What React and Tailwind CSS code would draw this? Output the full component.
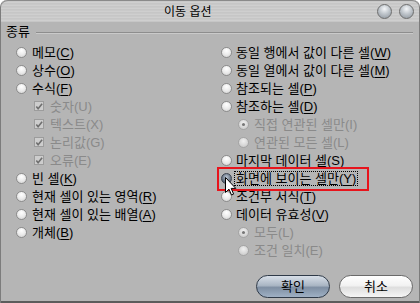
import React from 'react';

const leftItems = [
  { t: '메모', k: 'C' },
  { t: '상수', k: 'O' },
  { t: '수식', k: 'F' },
  { t: '숫자', k: 'U', sub: 'check' },
  { t: '텍스트', k: 'X', sub: 'check' },
  { t: '논리값', k: 'G', sub: 'check' },
  { t: '오류', k: 'E', sub: 'check' },
  { t: '빈 셀', k: 'K' },
  { t: '현재 셀이 있는 영역', k: 'R' },
  { t: '현재 셀이 있는 배열', k: 'A' },
  { t: '개체', k: 'B' },
];

const rightItems = [
  { t: '동일 행에서 값이 다른 셀', k: 'W' },
  { t: '동일 열에서 값이 다른 셀', k: 'M' },
  { t: '참조되는 셀', k: 'P' },
  { t: '참조하는 셀', k: 'D' },
  { t: '직접 연관된 셀만', k: 'I', sub: 'radioOn' },
  { t: '연관된 모든 셀', k: 'L', sub: 'radioOff' },
  { t: '마지막 데이터 셀', k: 'S', plain: true },
  { t: '화면에 보이는 셀만', k: 'Y', focus: true },
  { t: '조건부 서식', k: 'T' },
  { t: '데이터 유효성', k: 'V' },
  { t: '모두', k: 'L', sub: 'radioOn' },
  { t: '조건 일치', k: 'E', sub: 'radioOff' },
];

function Radio({ variant }) {
  if (variant === 'active') {
    return (
      <span className="w-[11px] h-[11px] rounded-full border border-[#3c4450] bg-[radial-gradient(circle_at_50%_35%,#b8c4d2_0%,#6c7888_55%,#3e4856_100%)] shrink-0" />
    );
  }
  if (variant === 'radioOn' || variant === 'radioOff') {
    return (
      <span className="w-[11px] h-[11px] rounded-full border border-[#a4a4a4] bg-[radial-gradient(circle_at_50%_35%,#f0f0f0_0%,#d6d6d6_60%,#c2c2c2_100%)] shrink-0 flex items-center justify-center">
        {variant === 'radioOn' && <span className="w-[3px] h-[3px] rounded-full bg-[#777]" />}
      </span>
    );
  }
  return (
    <span className="w-[11px] h-[11px] rounded-full border border-[#8c8c8c] bg-[radial-gradient(circle_at_50%_30%,#ffffff_0%,#ececec_50%,#cfcfcf_100%)] shrink-0" />
  );
}

function Check() {
  return (
    <span className="w-[10px] h-[10px] border border-[#9c9c9c] bg-[#cdcdcd] shrink-0 flex items-center justify-center">
      <svg width="9" height="9" viewBox="0 0 9 9">
        <path d="M1.5 4.5 L3.5 7 L8 1.5" stroke="#6e6e6e" strokeWidth="1.8" fill="none" />
      </svg>
    </span>
  );
}

function Row({ item, right }) {
  const disabled = !!item.sub;
  let marker;
  if (item.sub === 'check') marker = <Check />;
  else if (item.sub) marker = <Radio variant={item.sub} />;
  else marker = <Radio variant={item.focus ? 'active' : 'normal'} />;

  const indent = item.sub ? (right ? 'pl-[17px]' : 'pl-[18px]') : '';
  const gap = item.sub === 'check' ? 'gap-[6px]' : right && !item.sub ? 'gap-[4px]' : 'gap-[5px]';

  const label = (
    <>
      {item.t}(
      {disabled || item.plain ? item.k : <u className="underline-offset-2">{item.k}</u>})
    </>
  );

  return (
    <div className={`h-[18px] flex items-center ${indent} ${gap}`}>
      {marker}
      {item.focus ? (
        <span className="leading-[13px] border border-dotted border-black -ml-[2px] px-[1px] text-black whitespace-nowrap">
          {label}
        </span>
      ) : (
        <span className={`whitespace-nowrap ${disabled ? 'text-[#8a8a8a]' : 'text-black'}`}>{label}</span>
      )}
    </div>
  );
}

export default function App() {
  return (
    <div className="relative w-[420px] h-[303px] overflow-hidden bg-[#b5b5b5] font-['Liberation_Sans','Noto_Sans_CJK_KR',sans-serif] text-[13px] leading-none rounded-t-[7px] border-x border-[#7c7c7c]">
      {/* Title bar */}
      <div className="relative h-[22px] flex items-center bg-[repeating-linear-gradient(0deg,#c6c6c6_0px,#c6c6c6_1px,#cfcfcf_1px,#cfcfcf_2px,#c9c9c9_2px,#c9c9c9_3px)] border-t border-[#8a8a8a] rounded-t-[7px]">
        <span className="pl-[163px] text-[12px] text-black">이동 옵션</span>
        <div className="ml-auto mr-[5px] flex gap-[7px]">
          <span className="w-[15px] h-[15px] rounded-full border border-[#6e6e6e] bg-[radial-gradient(circle_at_50%_30%,#f4f6f8_0%,#c0c6cc_45%,#8a929a_100%)]" />
          <span className="w-[15px] h-[15px] rounded-full border border-[#6e6e6e] bg-[radial-gradient(circle_at_50%_30%,#f4f6f8_0%,#c0c6cc_45%,#8a929a_100%)]" />
        </div>
      </div>

      {/* Group header */}
      <div className="h-[21px] flex items-center pl-[5px] pr-[6px] gap-[6px]">
        <span className="text-black pb-[2px]">종류</span>
        <div className="flex-1 h-px bg-[#8e8e8e] border-b border-[#cacaca] box-content" />
      </div>

      {/* Options */}
      <div className="flex">
        <div className="w-[205px] pl-[15px] flex flex-col">
          {leftItems.map((it, i) => (
            <Row key={i} item={it} />
          ))}
        </div>
        <div className="pl-[15px] flex flex-col">
          {rightItems.map((it, i) => (
            <Row key={i} item={it} right />
          ))}
        </div>
      </div>

      {/* Buttons */}
      <div className="mt-[16px] flex justify-end gap-[9px] pr-[6px]">
        <button className="w-[74px] h-[23px] rounded-full border border-[#2f3a48] bg-[linear-gradient(180deg,#d8dfe8_0%,#aab6c4_45%,#7f8fa3_55%,#9fb0c4_100%)] text-black text-[13px]">
          확인
        </button>
        <button className="w-[74px] h-[23px] rounded-full border border-[#6a6a6a] bg-[linear-gradient(180deg,#ffffff_0%,#f2f2f2_45%,#dedede_55%,#f6f6f6_100%)] text-black text-[13px]">
          취소
        </button>
      </div>

      {/* Bottom edge */}
      <div className="absolute left-0 right-0 bottom-0 h-[2px] bg-[#5c5c5c]" />

      {/* Highlight box */}
      <div className="absolute left-[216px] top-[167px] w-[152px] h-[24px] border-2 border-[#e8141c]" />

      {/* Mouse cursor */}
      <svg className="absolute left-[224px] top-[177px]" width="12" height="19" viewBox="0 0 12 19">
        <path d="M0.5 0.5 L0.5 15.5 L4 12.2 L6.5 18 L8.6 17.1 L6.2 11.4 L10.8 11.4 Z" fill="white" stroke="black" strokeWidth="1" />
      </svg>
    </div>
  );
}
